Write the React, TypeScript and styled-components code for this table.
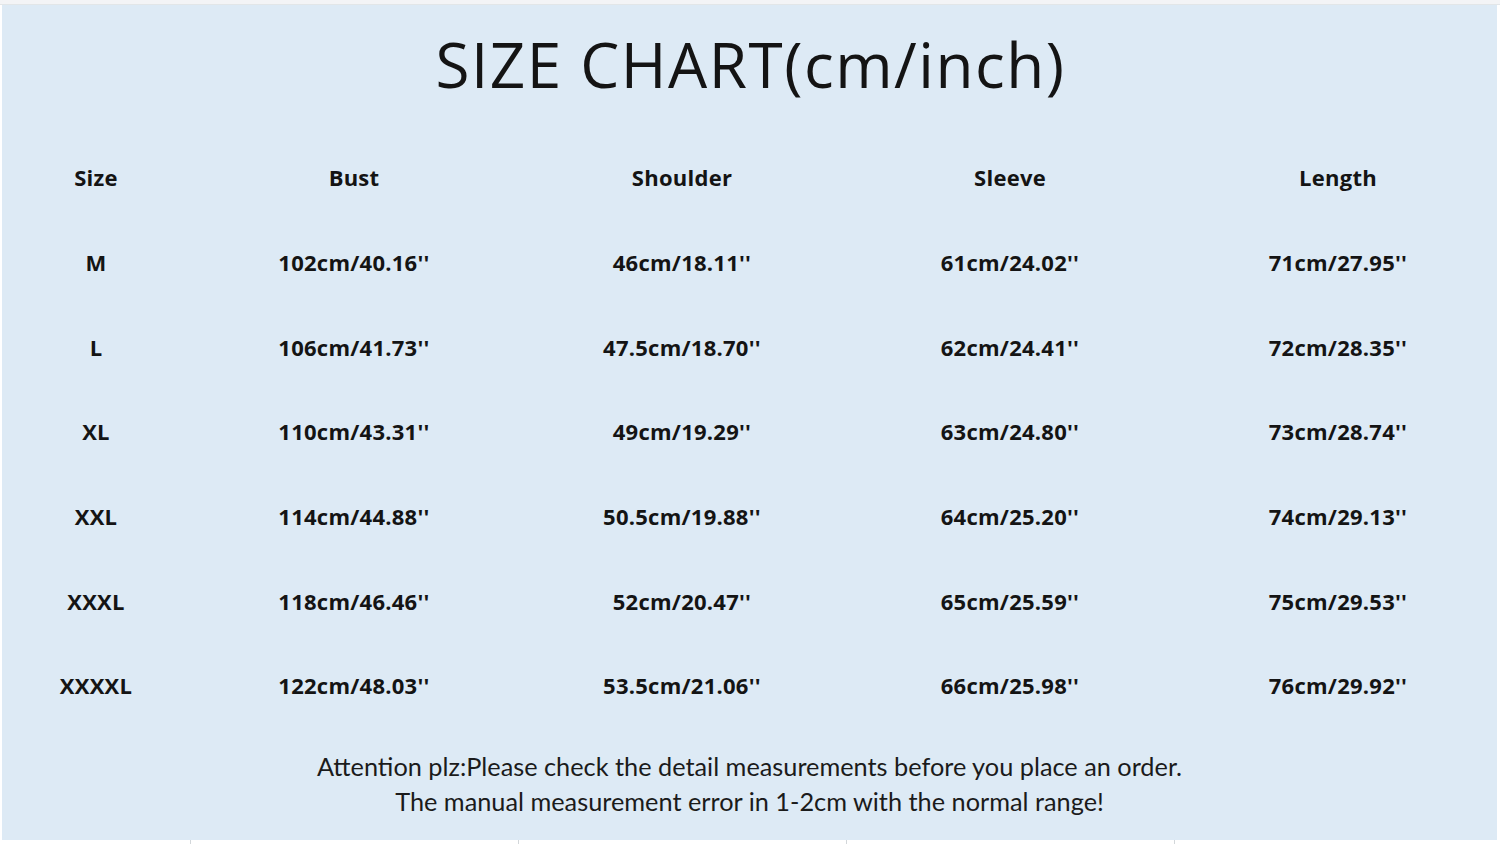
import styled, { createGlobalStyle } from "styled-components";

const GlobalStyle = createGlobalStyle`
  html, body {
    margin: 0;
    padding: 0;
    background: #ffffff;
  }
  body {
    width: 1500px;
    height: 846px;
    overflow: hidden;
  }
`;

const Page = styled.div`
  width: 1500px;
  height: 846px;
  display: flex;
  flex-direction: column;
  background: #ffffff;
`;

const TopEdge = styled.div`
  height: 4px;
  background: #f3f4f6;
  border-bottom: 1px solid #e2e6e8;
`;

const Panel = styled.main`
  flex: 1;
  margin: 0 3px 0 2px;
  background: #ddeaf5;
  display: flex;
  flex-direction: column;
`;

const Title = styled.h1`
  margin: 0;
  height: 130px;
  box-sizing: border-box;
  padding: 0 0 12px 2px;
  display: flex;
  align-items: center;
  justify-content: center;
  font-family: "Open Sans", "DejaVu Sans", sans-serif;
  font-weight: 400;
  font-size: 62px;
  letter-spacing: 1.5px;
  color: #141414;
`;

const Table = styled.div`
  display: grid;
  grid-template-columns: 188px repeat(4, 328px) 1fr;
  grid-auto-rows: 84.7px;
`;

const Cell = styled.div`
  display: flex;
  align-items: center;
  justify-content: center;
  font-family: "Open Sans", "Noto Sans", sans-serif;
  font-weight: 700;
  font-size: 22px;
  letter-spacing: 0.25px;
  color: #141414;
  white-space: nowrap;
`;

const LastCell = styled(Cell)`
  grid-column: span 2;
`;

const Note = styled.div`
  margin-top: 21px;
  display: flex;
  flex-direction: column;
  align-items: center;
  font-family: Lato, "Open Sans", sans-serif;
  font-size: 25.3px;
  line-height: 35px;
  color: #1b1b1b;
`;

const BottomEdge = styled.div`
  height: 6px;
  display: grid;
  grid-template-columns: 190px repeat(4, 328px) 1fr;
  background: #ffffff;
`;

const Tick = styled.span<{ $mark?: boolean }>`
  border-left: ${(p) => (p.$mark ? "1px solid #d3d7da" : "none")};
  height: 4px;
`;

const header = ["Size", "Bust", "Shoulder", "Sleeve", "Length"];

const rows = [
  ["M", "102cm/40.16''", "46cm/18.11''", "61cm/24.02''", "71cm/27.95''"],
  ["L", "106cm/41.73''", "47.5cm/18.70''", "62cm/24.41''", "72cm/28.35''"],
  ["XL", "110cm/43.31''", "49cm/19.29''", "63cm/24.80''", "73cm/28.74''"],
  ["XXL", "114cm/44.88''", "50.5cm/19.88''", "64cm/25.20''", "74cm/29.13''"],
  ["XXXL", "118cm/46.46''", "52cm/20.47''", "65cm/25.59''", "75cm/29.53''"],
  ["XXXXL", "122cm/48.03''", "53.5cm/21.06''", "66cm/25.98''", "76cm/29.92''"],
];

function Row({ cells }: { cells: string[] }) {
  return (
    <>
      {cells.slice(0, 4).map((c, i) => (
        <Cell key={i}>{c}</Cell>
      ))}
      <LastCell>{cells[4]}</LastCell>
    </>
  );
}

export default function App() {
  return (
    <>
      <GlobalStyle />
      <Page>
        <TopEdge />
        <Panel>
          <Title>SIZE CHART(cm/inch)</Title>
          <Table>
            <Row cells={header} />
            {rows.map((r) => (
              <Row key={r[0]} cells={r} />
            ))}
          </Table>
          <Note>
            <div>Attention plz:Please check the detail measurements before you place an order.</div>
            <div>The manual measurement error in 1-2cm with the normal range!</div>
          </Note>
        </Panel>
        <BottomEdge>
          <Tick />
          <Tick $mark />
          <Tick $mark />
          <Tick $mark />
          <Tick $mark />
          <Tick />
        </BottomEdge>
      </Page>
    </>
  );
}
